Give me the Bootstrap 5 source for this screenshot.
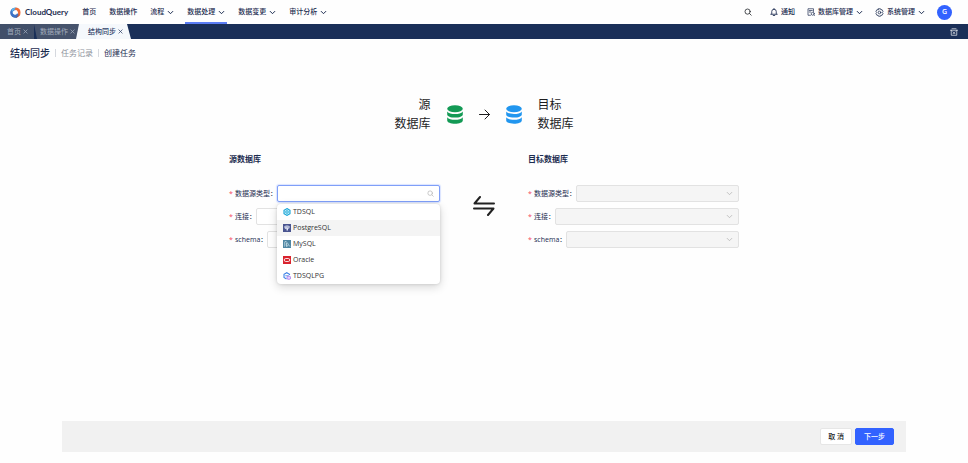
<!DOCTYPE html>
<html lang="zh-CN">
<head>
<meta charset="utf-8">
<meta name="viewport" content="width=device-width, initial-scale=1">
<title>CloudQuery - 结构同步</title>
<link rel="stylesheet" href="https://cdn.jsdelivr.net/npm/bootstrap@5.3.0/dist/css/bootstrap.min.css">
<style>
:root { --navy: #1a2f58; --ink: #1c2c50; --brand: #3262ff; }
body { font-family: "Open Sans", "Noto Sans CJK SC", sans-serif; font-size: 7px; line-height: 16px; color: var(--ink); background: #fefefe; }
svg { display: block; flex: none; }
.line { fill: none; stroke: currentColor; stroke-linecap: round; stroke-linejoin: round; }
a { color: inherit; text-decoration: none; }
button { font-size: 7px; }

.top-nav { height: 24px; padding: 0 16px 0 10px; }
.brand-name { font-family: Lato, "Open Sans", sans-serif; font-size: 8px; font-weight: 700; }
.menu { margin-left: 12px; gap: 9px; }
.menu-link { height: 24px; padding: 0 2px; gap: 3px; font-weight: 500; border: solid transparent; border-width: 2px 0; }
.menu-link.current { border-bottom-color: #5b7df5; }
.tools { gap: 12px; font-weight: 500; }
.tool { gap: 3px; }
.search-btn { margin-right: 6px; }
.avatar { width: 15px; height: 15px; border-radius: 50%; background: var(--brand); color: #fff; font-weight: 600; }

.tab-strip { height: 15px; background: var(--navy); color: #a3acbd; padding-right: 10px; }
.page-tab { height: 15px; gap: 2px; padding: 0 6px 0 7px; background: #414f69; }
.page-tab button { line-height: 0; color: inherit; }
.page-tab.second { background: #46536c; padding: 0 4px 0 6px; clip-path: polygon(0 0, 100% 0, 100% 100%, 3px 100%); }
.page-tab.current { background: #f5f8fc; color: #33456b; font-weight: 500; margin-left: -3px; padding: 0 8px 0 12px; clip-path: polygon(3px 0, calc(100% - 4px) 0, 100% 100%, 0 100%); }

.crumbs { padding: 6px 10px; font-size: 8px; gap: 5px; }
.crumbs h1 { font-size: 10px; line-height: 16px; font-weight: 500; }
.crumbs .sep { width: 1px; height: 8px; background: #d5d8de; }
.crumbs .past { color: #8d929c; }

.flow-row { margin-top: 28px; color: #1d1d1f; font-size: 12px; line-height: 19px; }
.flow-name { width: 52px; }
.green { color: #139a55; }
.blue { color: #2196ef; }

.pair { width: 100%; max-width: 510px; margin: 18px auto 0; }
.side { flex: 1 1 0; }
.side h2 { font-size: 8px; line-height: 16px; font-weight: 700; margin-bottom: 18px; }
.swap { width: 88px; padding-top: 45px; color: #222; }
.field { margin-bottom: 6px; }
.field label::before { content: "*"; color: #f5455c; display: inline-block; width: 6px; }
.box { height: 17px; border: 1px solid #e2e2e2; border-radius: 2px; background: #fff; padding: 0 5px; color: #b5b5b5; }
.box.off { background: #f5f5f5; }
.box.open { border-color: #7f9ff8; box-shadow: 0 0 1px 1px #dbe4ff; }
.box input, .box select { flex: 1 1 0; min-width: 0; height: 14px; padding: 0; border: 0; outline: 0; background: transparent; appearance: none; font-size: 7px; }
.choices { left: -1px; right: -1px; top: 18px; z-index: 5; border-radius: 4px; background: #fff; color: #333; box-shadow: 0 3px 10px rgba(0,0,0,.16), 0 0 3px rgba(0,0,0,.14); overflow: hidden; }
.choice { height: 16px; padding: 0 6px; gap: 2px; border: 0; background: transparent; color: inherit; width: 100%; text-align: left; }
.choice.hover { background: #f4f4f4; }

.actions { margin: 0 62px 11px; padding: 7px 12px; background: #f1f1f1; gap: 3px; }
.act { height: 17px; padding: 0 7px; border-radius: 2px; font-weight: 500; line-height: 15px; border: 1px solid #e6e6e6; background: #fff; color: #222; }
.act.go { padding: 0 8px; background: var(--brand); border-color: var(--brand); color: #fff; }
</style>
<script src="https://cdn.jsdelivr.net/npm/bootstrap@5.3.0/dist/js/bootstrap.bundle.min.js"></script>
</head>
<body class="d-flex flex-column min-vh-100">
<svg width="0" height="0" class="position-absolute" aria-hidden="true">
  <symbol id="down" viewBox="0 0 7 7"><path d="M1.200 2.400 3.500 4.700 5.800 2.400"/></symbol>
  <symbol id="close" viewBox="0 0 6 6"><path d="M1 1 5 5M5 1 1 5"/></symbol>
  <symbol id="find" viewBox="0 0 8 8"><circle cx="3.600" cy="3.600" r="2.600"/><path d="M5.600 5.600 7.200 7.200"/></symbol>
  <symbol id="store" viewBox="0 0 16 19"><ellipse cx="8" cy="3.700" rx="7.800" ry="3.500"/><path d="M.2 6.400C1.500 8.200 4.600 9 8 9s6.500-.8 7.800-2.600V9.400c0 1.900-3.500 3.200-7.800 3.200S.2 11.300.2 9.400zM.2 12.200c1.300 1.900 4.400 2.600 7.800 2.600s6.500-.7 7.800-2.600v3.200c0 1.900-3.500 3.300-7.800 3.300S.2 17.300.2 15.400z"/></symbol>
</svg>

<header class="top-nav d-flex align-items-center">
  <a href="#" class="d-flex align-items-center gap-1">
    <svg width="11" height="11" viewBox="0 0 22 22"><path d="M14 2A10 10 0 1 0 20 14L14 13A4.500 4.500 0 1 1 11 6.500Z" fill="#3d72c6"/><path d="M4 4A10 10 0 0 1 12 1L14 6A6 6 0 0 0 5 13 9 9 0 0 1 4 4Z" fill="#5cb8ed"/><path d="M12 1A10 10 0 0 1 21 11 10 10 0 0 1 12 21C15 19 17 15 16 11S12 5 9 6A8 8 0 0 1 12 1Z" fill="#ee6c37"/><path d="M3 16A10 10 0 0 0 14 21C18 18 17 14 16 12A6 6 0 0 1 3 16Z" fill="#354c8b"/></svg>
    <span class="brand-name">CloudQuery</span>
  </a>
  <nav class="menu d-flex text-nowrap">
    <a href="#" class="menu-link d-flex align-items-center">首页</a>
    <a href="#" class="menu-link d-flex align-items-center">数据操作</a>
    <a href="#" class="menu-link d-flex align-items-center">流程<svg class="line" width="7" height="7"><use href="#down"/></svg></a>
    <a href="#" class="menu-link current d-flex align-items-center">数据处理<svg class="line" width="7" height="7"><use href="#down"/></svg></a>
    <a href="#" class="menu-link d-flex align-items-center">数据变更<svg class="line" width="7" height="7"><use href="#down"/></svg></a>
    <a href="#" class="menu-link d-flex align-items-center">审计分析<svg class="line" width="7" height="7"><use href="#down"/></svg></a>
  </nav>
  <div class="tools d-flex align-items-center ms-auto text-nowrap">
    <button type="button" class="btn p-0 border-0 search-btn" aria-label="搜索"><svg class="line" width="8" height="8" stroke-width=".8"><use href="#find"/></svg></button>
    <a href="#" class="tool d-flex align-items-center"><svg class="line" width="8" height="8" viewBox="0 0 16 16" stroke-width="1.700"><path d="M1.500 12.500h13M3.500 12V7a4.500 4.500 0 0 1 9 0v5M6.500 15h3M8 1v1.500"/></svg>通知</a>
    <a href="#" class="tool d-flex align-items-center"><svg class="line" width="8" height="8" viewBox="0 0 16 16" stroke-width="1.400"><path d="M7 14.500H2v-13h11V7M4.500 5h6M4.500 8h3"/><circle cx="11.500" cy="11.500" r="3"/><path d="m14 14 1 1"/></svg>数据库管理<svg class="line" width="7" height="7"><use href="#down"/></svg></a>
    <a href="#" class="tool d-flex align-items-center"><svg class="line" width="9" height="9" viewBox="0 0 18 18" stroke-width="1.500"><path d="m7 1.500h4l.8 2.200 2.300-.4 2 3.500L14.700 9l1.400 2.200-2 3.500-2.300-.4-.8 2.200H7l-.8-2.200-2.300.4-2-3.500L3.300 9 1.900 6.800l2-3.500 2.300.4z"/><circle cx="9" cy="9" r="2.600"/></svg>系统管理<svg class="line" width="7" height="7"><use href="#down"/></svg></a>
    <button type="button" class="avatar border-0 p-0 d-flex align-items-center justify-content-center">G</button>
  </div>
</header>

<div class="tab-strip d-flex align-items-center text-nowrap">
  <div class="page-tab d-flex align-items-center"><a href="#">首页</a><button type="button" class="btn p-0 border-0" aria-label="关闭"><svg class="line" width="5" height="5" stroke-width=".9"><use href="#close"/></svg></button></div>
  <div class="page-tab second d-flex align-items-center"><a href="#">数据操作</a><button type="button" class="btn p-0 border-0" aria-label="关闭"><svg class="line" width="5" height="5" stroke-width=".9"><use href="#close"/></svg></button></div>
  <div class="page-tab current d-flex align-items-center"><a href="#">结构同步</a><button type="button" class="btn p-0 border-0" aria-label="关闭"><svg class="line" width="5" height="5" stroke-width=".9"><use href="#close"/></svg></button></div>
  <button type="button" class="btn p-0 border-0 ms-auto text-white" aria-label="关闭全部"><svg class="line" width="8" height="8" viewBox="0 0 16 16" stroke-width="1.300"><path d="M1 4.500h14M2.500 4.500v10h11v-10M4 1.500h8M6 7.500l4 4M10 7.500l-4 4"/></svg></button>
</div>

<div class="crumbs d-flex align-items-center">
  <h1 class="mb-0">结构同步</h1><span class="sep"></span><a href="#" class="past">任务记录</a><span class="sep"></span><span>创建任务</span>
</div>

<main class="flex-grow-1">
  <div class="flow-row d-flex justify-content-center align-items-center">
    <div class="flow-name text-end">源<br>数据库</div>
    <div class="d-flex align-items-center gap-3 px-3">
      <svg class="green" width="16" height="19" fill="currentColor"><use href="#store"/></svg>
      <svg class="line" width="11" height="11" viewBox="0 0 11 11"><path d="M.5 5.500h10M6 1l4.500 4.500L6 10"/></svg>
      <svg class="blue" width="16" height="19" fill="currentColor"><use href="#store"/></svg>
    </div>
    <div class="flow-name">目标<br>数据库</div>
  </div>

  <form class="pair d-flex align-items-start">
    <section class="side">
      <h2>源数据库</h2>
      <div class="field d-flex align-items-center">
        <label for="src-type">数据源类型：</label>
        <div class="box open flex-grow-1 d-flex align-items-center position-relative">
          <input id="src-type" type="text" autocomplete="off"><svg class="line" width="7" height="7" stroke-width=".8"><use href="#find"/></svg>
          <div class="choices position-absolute">
            <button type="button" class="choice d-flex align-items-center"><svg width="8" height="8" viewBox="0 0 16 16"><path d="M8 1.200 14 4.600v6.800L8 14.800 2 11.400V4.600z" fill="#c9f0fa" stroke="#16a3d6" stroke-width="2.200"/><circle cx="8" cy="8" r="2.600" fill="none" stroke="#16a3d6" stroke-width="1.700"/></svg>TDSQL</button>
            <button type="button" class="choice hover d-flex align-items-center"><svg width="8" height="8" viewBox="0 0 16 16"><path fill="#4a5590" d="M0 0h16v16H0z"/><path d="M3 4c2-1.500 8-1.500 10 0v4l-2 2-1-2v5H7V9L5 10 3 8z" fill="#dfe4f5"/><path d="M6 4v3M10 4v4" stroke="#4a5590" stroke-width="1.200"/></svg>PostgreSQL</button>
            <button type="button" class="choice d-flex align-items-center"><svg width="8" height="8" viewBox="0 0 16 16"><path fill="#4f86a3" d="M0 0h16v16H0z"/><path d="M3 13C5 9 2 6 4 3c4 0 6 4 7 7l3 3M7 6v7l3-2" fill="none" stroke="#d5e8ef" stroke-width="1.500"/></svg>MySQL</button>
            <button type="button" class="choice d-flex align-items-center"><svg width="8" height="8" viewBox="0 0 16 16"><path fill="#d9232e" d="M0 0h16v16H0z"/><rect x="2.500" y="5" width="11" height="6" rx="3" fill="none" stroke="#fff" stroke-width="1.700"/></svg>Oracle</button>
            <button type="button" class="choice d-flex align-items-center"><svg width="8" height="8" viewBox="0 0 16 16"><path d="M13 6V4.600L7.500 1.500 2 4.600v6.300L7 14" fill="none" stroke="#3f83e6" stroke-width="2.200"/><path d="M4.500 7.500h7" stroke="#3f83e6" stroke-width="1.600"/><rect x="8" y="8.500" width="7" height="6" rx="2" fill="#e4d2ff" stroke="#a06be8" stroke-width="1.500"/></svg>TDSQLPG</button>
          </div>
        </div>
      </div>
      <div class="field d-flex align-items-center">
        <label for="src-conn">连接：</label>
        <div class="box flex-grow-1 d-flex align-items-center"><select id="src-conn"><option></option></select><svg class="line" width="7" height="7" stroke-width=".8"><use href="#down"/></svg></div>
      </div>
      <div class="field d-flex align-items-center">
        <label for="src-schema">schema：</label>
        <div class="box flex-grow-1 d-flex align-items-center"><select id="src-schema"><option></option></select><svg class="line" width="7" height="7" stroke-width=".8"><use href="#down"/></svg></div>
      </div>
    </section>
    <div class="swap d-flex justify-content-center">
      <svg class="line" width="22" height="20" viewBox="0 0 22 20" stroke-width="2"><path d="M21 7.500H1.500L7 1M1 12.500h19.500L15 19"/></svg>
    </div>
    <section class="side">
      <h2>目标数据库</h2>
      <div class="field d-flex align-items-center">
        <label for="dst-type">数据源类型：</label>
        <div class="box off flex-grow-1 d-flex align-items-center"><select id="dst-type" disabled><option></option></select><svg class="line" width="7" height="7" stroke-width=".8"><use href="#down"/></svg></div>
      </div>
      <div class="field d-flex align-items-center">
        <label for="dst-conn">连接：</label>
        <div class="box off flex-grow-1 d-flex align-items-center"><select id="dst-conn" disabled><option></option></select><svg class="line" width="7" height="7" stroke-width=".8"><use href="#down"/></svg></div>
      </div>
      <div class="field d-flex align-items-center">
        <label for="dst-schema">schema：</label>
        <div class="box off flex-grow-1 d-flex align-items-center"><select id="dst-schema" disabled><option></option></select><svg class="line" width="7" height="7" stroke-width=".8"><use href="#down"/></svg></div>
      </div>
    </section>
  </form>
</main>

<footer class="actions d-flex justify-content-end">
  <button type="button" class="act">取 消</button>
  <button type="button" class="act go">下一步</button>
</footer>
</body>
</html>
